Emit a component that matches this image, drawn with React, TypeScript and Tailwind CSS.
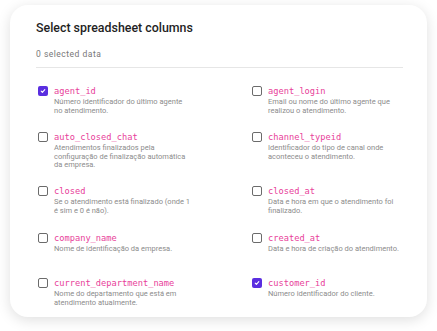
const columns = [
  { name: "agent_id", desc: "Número identificador do último agente no atendimento.", checked: true },
  { name: "agent_login", desc: "Email ou nome do último agente que realizou o atendimento.", checked: false },
  { name: "auto_closed_chat", desc: "Atendimentos finalizados pela configuração de finalização automática da empresa.", checked: false },
  { name: "channel_typeid", desc: "Identificador do tipo de canal onde aconteceu o atendimento.", checked: false },
  { name: "closed", desc: "Se o atendimento está finalizado (onde 1 é sim e 0 é não).", checked: false, wide: true },
  { name: "closed_at", desc: "Data e hora em que o atendimento foi finalizado.", checked: false },
  { name: "company_name", desc: "Nome de identificação da empresa.", checked: false },
  { name: "created_at", desc: "Data e hora de criação do atendimento.", checked: false },
  { name: "current_department_name", desc: "Nome do departamento que está em atendimento atualmente.", checked: false },
  { name: "customer_id", desc: "Número identificador do cliente.", checked: true },
];

function Checkbox({ checked }: { checked: boolean }) {
  if (checked) {
    return (
      <span className="mt-[1px] flex h-[10px] w-[10px] flex-shrink-0 items-center justify-center rounded-[2px] bg-[#5a2ee0]">
        <svg width="6" height="6" viewBox="0 0 10 10" fill="none">
          <path d="M2 5.3l2 2 4-4.5" stroke="white" strokeWidth="1.8" strokeLinecap="round" strokeLinejoin="round" />
        </svg>
      </span>
    );
  }
  return (
    <span className="mt-[1px] h-[10px] w-[10px] flex-shrink-0 rounded-[2px] border-[1.5px] border-[#6b6b6b] bg-white" />
  );
}

export default function App() {
  return (
    <div className="h-[331px] w-[437px] bg-white pl-[10px] pt-[5px]" style={{ fontFamily: "Roboto, 'Noto Sans', sans-serif" }}>
      <div className="h-[312px] w-[417px] rounded-[18px] bg-white pl-[26px] pr-[24px] pt-[16px] shadow-[0_3px_14px_rgba(0,0,0,0.13)]">
        <h1 className="text-[12.4px] font-medium leading-[14px] text-[#1f1f1f]">Select spreadsheet columns</h1>
        <p className="mt-[14px] text-[8.5px] leading-[10px] tracking-[0.5px] text-[#777]">0 selected data</p>
        <div className="mt-[8px] h-px w-[367px] bg-[#e6e6e6]" />

        <div className="mt-[17px] grid grid-cols-[214px_1fr] grid-rows-[46px_54px_47px_45px_auto] pl-[2px]">
          {columns.map((c) => (
            <div key={c.name} className="flex items-start gap-[6px]">
              <Checkbox checked={c.checked} />
              <div>
                <div
                  className="text-[8.7px] leading-[12px] text-[#e8419a]"
                  style={{ fontFamily: "'DejaVu Sans Mono', monospace" }}
                >
                  {c.name}
                </div>
                <div
                  className={`mt-[1px] text-[7.5px] leading-[8.6px] text-[#8c8c8c] ${
                    c.wide ? "max-w-[138px]" : "max-w-[134px]"
                  }`}
                >
                  {c.desc}
                </div>
              </div>
            </div>
          ))}
        </div>
      </div>
    </div>
  );
}
